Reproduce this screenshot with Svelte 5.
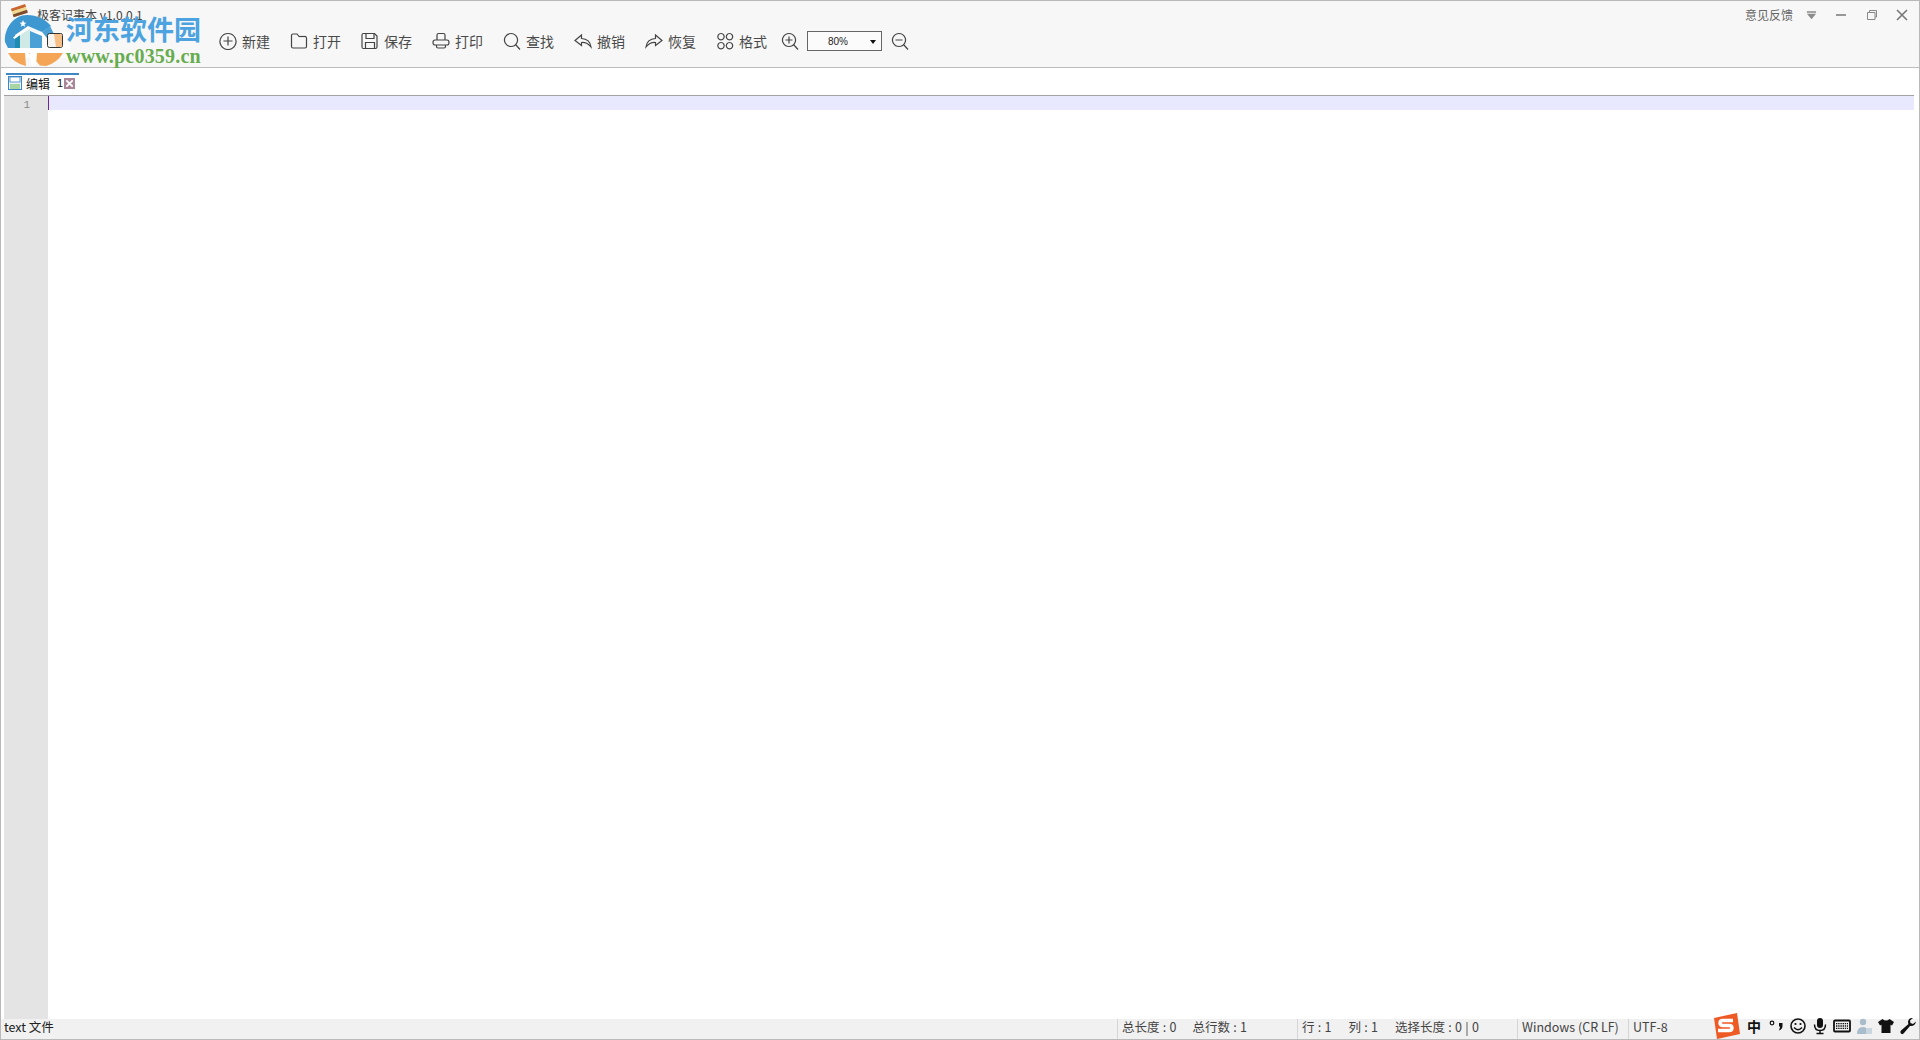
<script>
  const tools = [
    { label: '新建', d: ['M9 1.500a8 8 0 1 0 .01 0Z', 'M9 4.500v9M4.500 9h9'] },
    { label: '打开', d: ['M1.500 3.500q0-1.500 1.500-1.500h4l2 2.500h6q1.500 0 1.500 1.500v8.500q0 1.500-1.500 1.500H3q-1.500 0-1.500-1.500Z', 'M9 4.500h7'] },
    { label: '保存', d: ['M2.500 1.500h11l2.500 2.500v11q0 1.500-1.500 1.500h-12q-1.500 0-1.500-1.500v-12q0-1.500 1.500-1.500Z', 'M5 1.500v5h8v-5M4.500 16.500v-6h9v6'] },
    { label: '打印', d: ['M5 8V3q0-1.500 1.500-1.500h5Q13 1.500 13 3v5', 'M3 8h12q2 0 2 2.500T15 13H3q-2 0-2-2.500T3 8Z', 'M4.500 13v1.500q0 1.500 1.500 1.500h6q1.500 0 1.500-1.500V13'] },
    { label: '查找', d: ['M8 1.500a6.500 6.500 0 1 0 .01 0Z', 'M12.500 12.500l4.500 5'] },
    { label: '撤销', d: ['M7.500 3 1 8.500l6.500 5v-3q5.500-.5 9.500 4.500-1-8-9.500-8.500Z'] },
    { label: '恢复', d: ['M10.500 3 17 8.500l-6.500 5v-3Q5 10 1 15q1-8 9.500-8.500Z'] },
    { label: '格式', d: ['M5 1.500a3.200 3.200 0 1 0 .01 0ZM13.500 1.500a3.200 3.200 0 1 0 .01 0ZM5 10.500a3.200 3.200 0 1 0 .01 0ZM13.500 10.500a3.200 3.200 0 1 0 .01 0Z'] }
  ];
</script>

<div class="win">
  <header class="head">
    <div class="title-row">
      <span class="app-title">极客记事本 v1.0.0.1</span>
      <div class="win-ctrl">
        <span class="feedback">意见反馈</span>
        <svg class="ctl arrow" viewBox="0 0 12 10" aria-hidden="true"><path d="M1 1h10v1.500H1ZM1 3.500h10L6 9.500Z" fill="#8b8b8b"/></svg>
        <svg class="ctl wide" viewBox="0 0 12 12" aria-hidden="true"><path d="M1 6h10" stroke="#777" stroke-width="1.500"/></svg>
        <svg class="ctl wide" viewBox="0 0 12 12" aria-hidden="true"><path d="M1.500 3.500h7.500v7H1.500ZM3.500 3.500V1.500h7v6.500H9" fill="none" stroke="#888"/></svg>
        <svg class="ctl" viewBox="0 0 12 12" aria-hidden="true"><path d="M1 1l10 10M11 1 1 11" stroke="#777" stroke-width="1.600"/></svg>
      </div>
    </div>
    <div class="toolbar">
      {#each tools as t}
        <div class="tool">
          <svg viewBox="0 0 18 18" aria-hidden="true">
            {#each t.d as p}<path d={p} />{/each}
          </svg>
          <span>{t.label}</span>
        </div>
      {/each}
      <div class="zoom">
        <svg viewBox="0 0 18 18" aria-hidden="true"><path d="M8 1.500a6.500 6.500 0 1 0 .01 0Z"/><path d="M12.500 12.500l4.500 5M8 4.500v7M4.500 8h7"/></svg>
        <div class="select"><span>80%</span><i></i></div>
        <svg viewBox="0 0 18 18" aria-hidden="true"><path d="M8 1.500a6.500 6.500 0 1 0 .01 0Z"/><path d="M12.500 12.500l4.500 5M4.500 8h7"/></svg>
      </div>
    </div>
  </header>

  <div class="tabs">
    <div class="tab">
      <svg class="disk" viewBox="0 0 14 14" aria-hidden="true">
        <rect x="0.500" y="0.500" width="13" height="13" fill="#e9f1f6" stroke="#3f87c5"/>
        <rect x="2" y="1" width="10" height="5" fill="#fff" stroke="#3f87c5" stroke-width="0.800"/>
        <rect x="2" y="8" width="10" height="5" fill="#a9d6a0"/>
      </svg>
      <span class="tab-name">编辑</span>
      <span class="tab-num">1</span>
      <svg class="tab-x" viewBox="0 0 12 12" aria-hidden="true">
        <rect width="12" height="12" fill="#a9859a"/>
        <path d="M2.500 2.500l7 7M9.500 2.500l-7 7" stroke="#fff" stroke-width="2"/>
      </svg>
    </div>
  </div>

  <main class="editor">
    <div class="gutter"><span>1</span></div>
    <div class="text-area"><div class="cur-line"></div></div>
  </main>

  <footer class="status">
    <span class="kind">text 文件</span>
    <div class="cell c1"><span>总长度 : 0</span><span>总行数 : 1</span></div>
    <div class="cell c2"><span>行 : 1</span><span>列 : 1</span><span>选择长度 : 0 | 0</span></div>
    <div class="cell c3">Windows (CR LF)</div>
    <div class="cell c4">UTF-8</div>
  </footer>

  <div class="ime" aria-hidden="true">
    <svg class="sogou" viewBox="0 0 28 26">
      <path d="M2 5 25 0l3 21-23 5Z" fill="#ee5a24"/>
      <path d="M21 7.500H11q-3 0-3 2.500t3 2.500h6q3 0 3 2.500t-3 2.500H6" fill="none" stroke="#fff" stroke-width="3.400"/>
    </svg>
    <span class="zh">中</span>
    <svg viewBox="0 0 18 18"><circle cx="5" cy="6" r="1.800" fill="none" stroke="#111" stroke-width="1.200"/><path d="M12 6h3.500v3q0 3-3.500 4.500l1.200-4H12Z" fill="#111"/></svg>
    <svg viewBox="0 0 18 18"><circle cx="9" cy="9" r="7" fill="none" stroke="#111" stroke-width="1.600"/><circle cx="6.500" cy="7" r="1.100" fill="#111"/><circle cx="11.500" cy="7" r="1.100" fill="#111"/><path d="M5 10.500q4 4.500 8 0" fill="none" stroke="#111" stroke-width="1.400"/></svg>
    <svg viewBox="0 0 18 18"><rect x="6" y="1" width="6" height="10" rx="3" fill="#111"/><path d="M3.500 7.500q0 6 5.500 6t5.500-6M9 13.500V16M5.500 16.500h7" fill="none" stroke="#111" stroke-width="1.500"/></svg>
    <svg viewBox="0 0 18 18"><rect x="1" y="3.500" width="16" height="11" rx="1" fill="none" stroke="#111" stroke-width="1.800"/><path d="M3 6.600h12M3 9h12M3 11.400h12" stroke="#111" stroke-width="1.400" stroke-dasharray="1.400 .8"/></svg>
    <svg viewBox="0 0 18 18"><circle cx="8" cy="5" r="3.200" fill="#a9bccb"/><path d="M2 17q0-7 6-7 3 0 4 2l-1 5Z" fill="#a9bccb"/><rect x="11" y="11" width="6" height="6" fill="#c9d6e0"/></svg>
    <svg viewBox="0 0 18 18"><path d="M5.500 2 1 5l2 3.500 1.500-.8V16h9V7.700l1.500.8L17 5l-4.500-3Q9 5 5.500 2Z" fill="#111"/></svg>
    <svg viewBox="0 0 18 18"><path d="M17 4.500l-3 2.500-2.500-1-.5-2.500L14 1Q9.500.5 9 5q0 1.500.5 2L2 13.500Q.5 15 2 16.500t3-.5L11 9q5 .5 6-4.500Z" fill="#111"/></svg>
  </div>

  <div class="watermark" aria-hidden="true">
    <svg class="wm-logo" viewBox="0 0 80 70">
      <rect x="8" y="32" width="62" height="26" fill="#fff" fill-opacity="0.75"/>
      <path d="M5 42C4 28 14 15 27 15c10 0 18 4 24 11l-9 6-14-6-13 9v13H8Z" fill="#3d97d1"/>
      <path d="M42 32l8-6 5 10-8 2ZM30 31l12 5v12H30Z" fill="#4ba0d6"/>
      <path d="M15 38l5-3v13h-5Z" fill="#1f8bb0"/>
      <path d="M20 35l10-6v19H20Z" fill="#cfe9e6"/>
      <path d="M13 37.500 28 26.500l1.500 1.500-15 11Z" fill="#fff"/>
      <path d="M23 20l1 2.500 2.500.2-2 1.600.7 2.500-2.200-1.400-2.200 1.400.7-2.500-2-1.600 2.500-.2Z" fill="#fff"/>
      <path d="M8 53h17l1 13q-13-3-18-13ZM29 53h34q-6 10-17 13l-6-.5Z" fill="#f4a656"/>
      <path d="M30 53h7l-1 13h-5Z" fill="#fff"/>
      <rect x="47.500" y="33.500" width="15" height="14" rx="2" fill="#f7f3ee" stroke="#333"/>
      <path d="M54 34h6.500q1.500 0 1.500 2v9.500q0 1.500-1.500 1.500H56Z" fill="#f6bf85"/>
      <g transform="rotate(-18 20 11)">
        <rect x="12" y="6" width="15" height="3" fill="#c8662e"/>
        <rect x="12" y="9" width="15" height="3" fill="#f1d98d"/>
        <rect x="12" y="12" width="15" height="3" fill="#7e4c2a"/>
      </g>
    </svg>
    <div class="wm-name">河东软件园</div>
    <div class="wm-url">www.pc0359.cn</div>
  </div>
</div>

<style>
  :global(body) { margin: 0; background: #fff; }
  .win {
    position: relative;
    width: 1920px;
    height: 1040px;
    box-sizing: border-box;
    border: 1px solid #b9b9b9;
    display: flex;
    flex-direction: column;
    overflow: hidden;
    background: #fff;
    font-family: "Noto Sans CJK SC", "Noto Sans", sans-serif;
    color: #444;
  }
  .head {
    height: 67px;
    flex: none;
    box-sizing: border-box;
    background: #f7f7f7;
    border-bottom: 1px solid #bdbdbd;
    display: flex;
    flex-direction: column;
  }
  .title-row {
    height: 27px;
    display: flex;
    align-items: center;
    justify-content: space-between;
    padding: 0 11px 1px 36px;
    box-sizing: border-box;
  }
  .app-title { font-size: 12px; color: #444; }
  .win-ctrl { display: flex; align-items: center; padding-top: 2px; }
  .feedback { font-size: 12px; color: #666; margin-right: 13px; padding-bottom: 1px; }
  .ctl { width: 12px; height: 12px; margin-left: 18px; }
  .ctl.wide { margin-left: 19px; }
  .ctl.arrow { margin-left: 0; margin-right: -1px; width: 11px; height: 10px; }
  .toolbar {
    display: flex;
    align-items: center;
    padding: 0 0 0 218px;
    height: 26px;
  }
  .tool {
    width: 71px;
    display: flex;
    align-items: center;
    gap: 5px;
    font-size: 14px;
    color: #4a4a4a;
  }
  .tool span { padding-bottom: 1px; }
  .tool svg, .zoom svg {
    width: 18px;
    height: 18px;
    flex: none;
    fill: none;
    stroke: #444;
    stroke-width: 1.200;
  }
  .zoom { display: flex; align-items: center; margin-left: -6px; }
  .select {
    width: 75px;
    height: 20px;
    box-sizing: border-box;
    border: 1px solid #666;
    background: #fbfbfb;
    margin: 0 9px 0 8px;
    display: flex;
    align-items: center;
    font: 10px "Liberation Sans", sans-serif;
    color: #222;
    position: relative;
  }
  .select span { margin-left: 20px; }
  .select i {
    position: absolute;
    right: 5px;
    top: 8px;
    border: 3.500px solid transparent;
    border-top: 4px solid #111;
    border-bottom: 0;
  }
  .tabs {
    height: 27px;
    flex: none;
    box-sizing: border-box;
    padding: 5px 0 0 5px;
    display: flex;
  }
  .tab {
    width: 73px;
    height: 22px;
    box-sizing: border-box;
    border-top: 2px solid #3f87c5;
    display: flex;
    align-items: center;
    padding: 0 0 4px 2px;
  }
  .disk { width: 14px; height: 14px; flex: none; }
  .tab-name { font-size: 12px; color: #111; margin-left: 4px; }
  .tab-num { font: 11px "Liberation Sans", sans-serif; color: #111; margin-left: 7px; }
  .tab-x { width: 11px; height: 11px; margin-left: 1px; flex: none; }
  .editor {
    flex: 1;
    margin: 0 5px 0 3px;
    border-top: 1px solid #a3a3a3;
    display: flex;
    min-height: 0;
  }
  .gutter {
    width: 44px;
    flex: none;
    background: #e4e4e4;
    text-align: right;
    box-sizing: border-box;
    padding: 2px 18px 0 0;
    font: 11px/14px "Liberation Mono", monospace;
    color: #888;
  }
  .text-area { flex: 1; }
  .cur-line {
    height: 14px;
    background: #e8e8ff;
    border-left: 1px solid #6a2a96;
  }
  .status {
    height: 20px;
    flex: none;
    box-sizing: border-box;
    background: #f1f1f1;
    display: flex;
    align-items: center;
    font-size: 12.500px;
    color: #444;
    padding-left: 3px;
  }
  .kind { color: #222; width: 1113px; flex: none; padding-bottom: 6px; }
  .cell {
    height: 100%;
    box-sizing: border-box;
    border-left: 1px solid #d5d5d5;
    display: flex;
    align-items: center;
    padding: 0 0 6px 4px;
    flex: none;
    gap: 16px;
  }
  .c1 { width: 180px; word-spacing: 0.500px; }
  .c2 { width: 220px; padding-left: 4px; gap: 17px; word-spacing: 0.500px; }
  .c3 { width: 111px; }
  .ime {
    position: absolute;
    right: 2px;
    bottom: 0;
    display: flex;
    align-items: center;
    gap: 4px;
  }
  .ime svg { width: 18px; height: 18px; flex: none; }
  .ime .sogou { width: 28px; height: 26px; margin-right: 1px; }
  .zh { width: 18px; font-size: 14px; font-weight: 700; color: #111; text-align: center; }
  .watermark {
    position: absolute;
    left: -1px;
    top: -1px;
    width: 210px;
    height: 70px;
  }
  .wm-logo { position: absolute; left: 0; top: 0; width: 80px; height: 70px; }
  .wm-name {
    position: absolute;
    left: 66px;
    top: 13px;
    font: 700 27px/32px "Noto Sans CJK SC", sans-serif;
    color: #4da3df;
    white-space: nowrap;
  }
  .wm-url {
    position: absolute;
    left: 66px;
    top: 46px;
    font: 700 20px/20px "Liberation Serif", serif;
    letter-spacing: 0.200px;
    color: #67ad4f;
    white-space: nowrap;
  }
</style>
